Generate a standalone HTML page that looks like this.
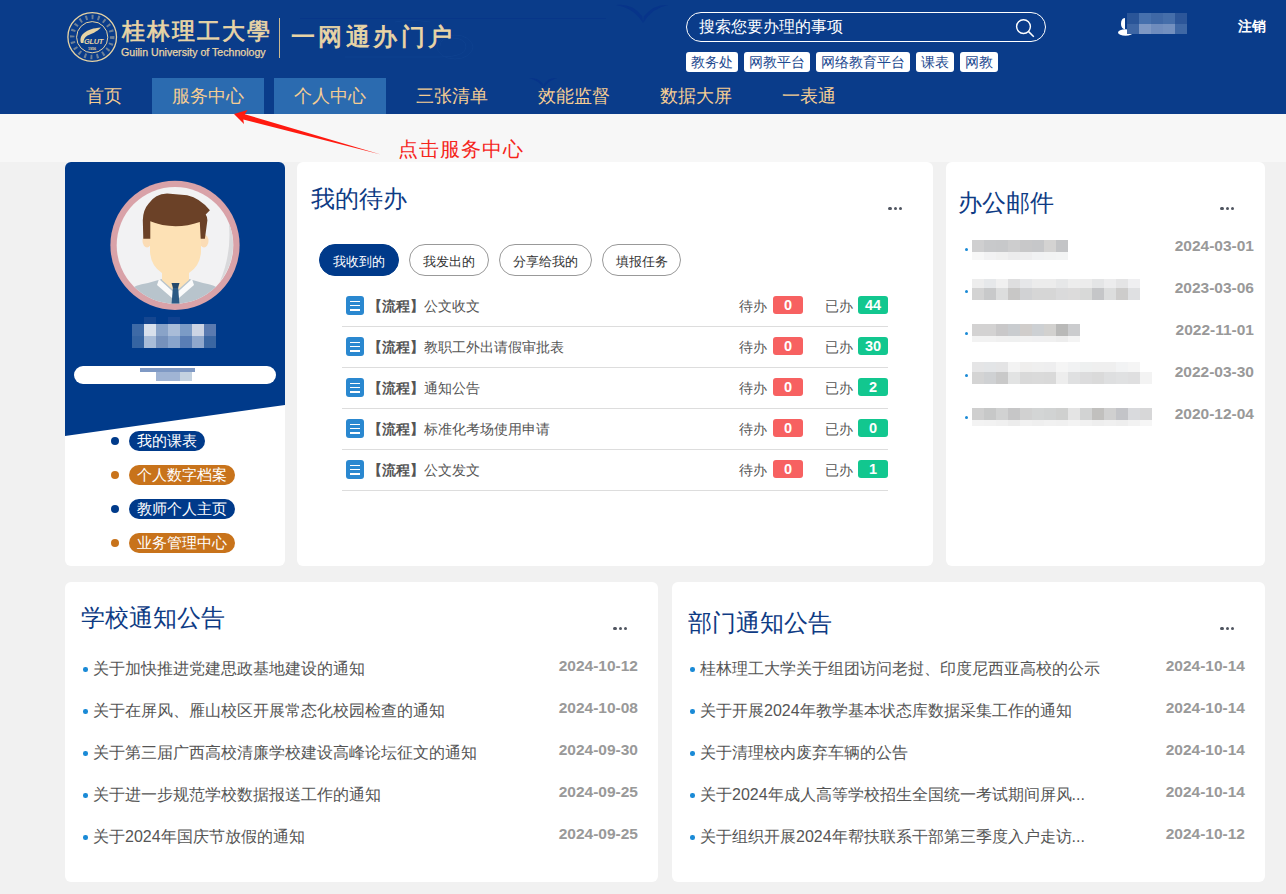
<!DOCTYPE html>
<html><head><meta charset="utf-8">
<style>
*{margin:0;padding:0;box-sizing:border-box}
html,body{width:1286px;height:894px;overflow:hidden;background:#f1f1f1;font-family:"Liberation Sans",sans-serif}
.abs{position:absolute}
#hdr{position:absolute;left:0;top:0;width:1286px;height:114px;background:#0a3c8a}
#band{position:absolute;left:0;top:114px;width:1286px;height:48px;background:#f7f7f7}
.nav{position:absolute;top:78px;height:36px;line-height:36px;font-size:18px;color:#f5cd93;padding:0 20px;white-space:nowrap}
.nav.on{background:#2b6bb0}
.tag{position:absolute;top:52px;height:20px;line-height:20px;font-size:14px;color:#1d4a90;background:#fff;border-radius:3px;padding:0 5px;white-space:nowrap}
.card{position:absolute;background:#fff;border-radius:6px;overflow:hidden}
.ttl{position:absolute;font-size:24px;color:#0e3b84;line-height:30px;white-space:nowrap}
.more{position:absolute;width:14px;height:4px}
.more i{position:absolute;top:0.5px;width:3.2px;height:3.2px;border-radius:50%;background:#505560}
.pill{position:absolute;height:20px;line-height:20px;font-size:15px;color:#fff;border-radius:10px;padding:0 8px;white-space:nowrap}
.dot{position:absolute;width:8px;height:8px;border-radius:50%}
.tab{position:absolute;top:244px;height:32px;line-height:33px;font-size:13px;border-radius:16px;border:1px solid #999;color:#333;text-align:center;white-space:nowrap}
.row{position:absolute;left:342px;width:546px;height:41px;border-bottom:1px solid #ddd}
.ico{position:absolute;left:4px;width:18px;height:19px;background:#2a88d0;border-radius:3px}
.ico i{position:absolute;left:4px;width:10px;height:1.3px;background:#fff}
.rt{position:absolute;left:26px;font-size:14px;color:#555;line-height:20px;white-space:nowrap}
.rt b{color:#555}
.lab{position:absolute;font-size:14px;color:#555;line-height:20px}
.bdg{position:absolute;width:30px;height:18px;line-height:18px;border-radius:3px;color:#fff;font-weight:bold;font-size:14.5px;text-align:center}
.date{position:absolute;font-size:15.5px;font-weight:bold;color:#999;line-height:18px;white-space:nowrap;text-align:right}
.nt{position:absolute;font-size:16px;color:#555;line-height:20px;white-space:nowrap}
.bul{position:absolute;width:4.5px;height:4.5px;border-radius:50%;background:#1a8ad6}
</style></head><body>
<div id="hdr"></div>
<div id="band"></div>
<svg class="abs" style="left:0;top:0" width="1286" height="114">
<path d="M616,5 Q632,3 642,16 L643,23 L644,16 Q654,4 668,5 Q652,8 643,23 Q634,8 616,5 Z" fill="#06328a" opacity="0.8"/>
<path d="M529,78 Q538,77 543,84 L543,88 L544,84 Q549,77 557,78 Q549,80 543.5,88 Q538,80 529,78 Z" fill="#06328a" opacity="0.8"/>
<line x1="300" y1="18.5" x2="606" y2="18.5" stroke="#073489" stroke-width="1" opacity="0.7"/>
<g fill="none" stroke="#0f4290" stroke-width="1" opacity="0.9">
<path d="M345,57 L440,57 Q466,57 466,47 Q466,38 452,38 Q440,38 440,46"/>
<path d="M395,22 Q410,19 430,22"/>
<ellipse cx="455" cy="47" rx="18" ry="12"/>
</g>

</svg>
<!-- nav -->
<div class="nav" style="left:66px">首页</div>
<div class="nav on" style="left:152px">服务中心</div>
<div class="nav on" style="left:274px">个人中心</div>
<div class="nav" style="left:396px">三张清单</div>
<div class="nav" style="left:518px">效能监督</div>
<div class="nav" style="left:640px">数据大屏</div>
<div class="nav" style="left:762px">一表通</div>
<!-- search -->
<div class="abs" style="left:686px;top:12px;width:360px;height:30px;border:1px solid #fff;border-radius:15px"></div>
<div class="abs" style="left:699px;top:15px;font-size:16px;line-height:24px;color:#fff">搜索您要办理的事项</div>
<svg class="abs" style="left:1010px;top:15px" width="30" height="28" viewBox="0 0 30 28"><circle cx="13.5" cy="11.6" r="6.9" fill="none" stroke="#fff" stroke-width="1.4"/><line x1="18.6" y1="16.6" x2="23.8" y2="21.8" stroke="#fff" stroke-width="1.5"/></svg>
<div class="tag" style="left:686px">教务处</div>
<div class="tag" style="left:744px">网教平台</div>
<div class="tag" style="left:816px">网络教育平台</div>
<div class="tag" style="left:916px">课表</div>
<div class="tag" style="left:960px">网教</div>

<!-- logo -->
<svg class="abs" style="left:62px;top:7px" width="62" height="62" viewBox="62 7 62 62">
<g fill="none" stroke="#e6d3a5">
<circle cx="92.2" cy="37" r="24.3" stroke-width="1.3"/>
<circle cx="92.2" cy="37.2" r="15.6" stroke-width="1"/>
<circle cx="92.2" cy="37" r="20" stroke-width="4.5" stroke-dasharray="2 4.2" opacity="0.45"/>
</g>
<path d="M81,43 C78.5,35 86,28.5 101,27.5 C97,32 91,34 87.5,35.5 C84.5,37 83.5,40 83.5,43 Z" fill="#e6d3a5"/>
<text x="93.5" y="44.3" font-size="7.5" font-weight="bold" font-style="italic" fill="#e6d3a5" text-anchor="middle" font-family="Liberation Sans" letter-spacing="-0.3">GLUT</text>
<text x="92" y="49.6" font-size="3.6" font-weight="bold" fill="#e6d3a5" text-anchor="middle" font-family="Liberation Sans">1956</text>
</svg>
<div class="abs" id="cal1" style="left:122px;top:15px;font-size:23px;line-height:32px;font-weight:normal;-webkit-text-stroke:0.7px #e9d5a6;color:#e9d5a6;letter-spacing:2px;white-space:nowrap">桂林理工大學</div>
<div class="abs" id="eng" style="left:121px;top:44.5px;font-size:10.6px;line-height:14px;color:#e9d5a6;white-space:nowrap;-webkit-text-stroke:0.25px #e9d5a6">Guilin University of Technology</div>
<div class="abs" style="left:279px;top:18px;width:1px;height:40px;background:#c9b890"></div>
<div class="abs" id="cal2" style="left:291px;top:20px;font-size:24px;line-height:34px;font-weight:normal;-webkit-text-stroke:0.8px #e9d5a6;color:#e9d5a6;letter-spacing:3.4px;white-space:nowrap">一网通办门户</div>
<!-- user -->
<svg class="abs" style="left:1116px;top:15px" width="20" height="22" viewBox="0 0 20 22"><path d="M9,3 C6,3 5,6 5,9 C5,12 6.5,14 9,14.5 L9,3 Z" fill="#fff"/><ellipse cx="9.5" cy="17.5" rx="7.5" ry="3.2" fill="#fff"/></svg>
<div class="abs" style="left:1238px;top:17px;font-size:14px;line-height:18px;color:#fff;font-weight:bold">注销</div>
<!-- annotation -->
<div class="abs" style="left:398px;top:137px;font-size:20px;line-height:24px;color:#f5251b;letter-spacing:1px;white-space:nowrap">点击服务中心</div>
<svg class="abs" style="left:0;top:0" width="1286" height="170"><path d="M234,114 L247.5,110 L244.8,114.2 L380.8,154.4 L243.3,119.6 L244,124 Z" fill="#ff1a10"/></svg>

<!-- card1 profile -->
<div class="card" style="left:65px;top:162px;width:220px;height:404px">
  <svg class="abs" style="left:0;top:0" width="220" height="280"><polygon points="0,0 220,0 220,243 0,274" fill="#003a8a"/></svg>
</div>
<div class="pill" style="left:129px;top:431px;background:#003a8a">我的课表</div>
<div class="pill" style="left:129px;top:465px;background:#c8731b">个人数字档案</div>
<div class="pill" style="left:129px;top:499px;background:#003a8a">教师个人主页</div>
<div class="pill" style="left:129px;top:533px;background:#c8731b">业务管理中心</div>
<div class="dot" style="left:111px;top:437px;background:#003a8a"></div>
<div class="dot" style="left:111px;top:471px;background:#c8731b"></div>
<div class="dot" style="left:111px;top:505px;background:#003a8a"></div>
<div class="dot" style="left:111px;top:539px;background:#c8731b"></div>
<div class="abs" style="left:74px;top:366px;width:202px;height:18px;background:#fff;border-radius:9px"></div>


<svg class="abs" style="left:110px;top:180px" width="130" height="131" viewBox="0 0 130 131">
<defs><clipPath id="cc"><circle cx="65" cy="65.3" r="58.3"/></clipPath></defs>
<circle cx="65" cy="65.3" r="64.6" fill="#d9a2a8"/>
<circle cx="65" cy="65.3" r="58.3" fill="#f2f2f3"/>
<path d="M118.9,43.3 A58.3,58.3 0 0 1 109.6,102.3 A120,120 0 0 0 118.9,43.3 Z" fill="#d9d9db"/>
<g clip-path="url(#cc)">
<path d="M16,131 L20,110 Q24,105 38,103 L52,99 L79,99 L93,103 Q106,105 110,110 L114,131 Z" fill="#b8c4cc"/>
<path d="M49,99 L65.5,114 L82,99 L84,105 L65.5,121 L47,105 Z" fill="#fafafa"/>
<path d="M52,92 L79,92 L79,100 L65.5,112 L52,100 Z" fill="#fde1b5"/>
<path d="M63,106 L68,106 L70,131 L61,131 Z" fill="#2c5a85"/>
<path d="M61.5,103 L69.5,103 L68,108 L63,108 Z" fill="#24496c"/>
</g>
<ellipse cx="37" cy="61" rx="4.5" ry="6.5" fill="#fbdcb5"/>
<ellipse cx="94" cy="61" rx="4.5" ry="6.5" fill="#fbdcb5"/>
<path d="M40,38 L91,38 L91,72 Q90,86 79,93 Q72,100 65.5,101 Q59,100 52,93 Q41,86 40,72 Z" fill="#fde1b5"/>
<path d="M33.3,58.8 L32.8,40.3 Q33,30 38.7,23.6 Q45,14 57.1,13.5 L77.2,15.2 Q90,18 99.9,30.3 L95.7,34.5 Q97.5,37 97.4,40.3 L94.9,58.8 L90.7,58.8 L89.8,42 Q78,46.2 65.5,46.2 Q52,46 40.3,41.2 L40.3,58.8 Z" fill="#6b4127"/>
</svg>
<div class="abs" style="left:1127px;top:13px;width:12px;height:11px;background:#2a5598"></div><div class="abs" style="left:1127px;top:24px;width:12px;height:10px;background:#3e66a4"></div>
<div class="abs" style="left:1139px;top:13px;width:12px;height:11px;background:#4670ad"></div><div class="abs" style="left:1139px;top:24px;width:12px;height:10px;background:#7e98c4"></div>
<div class="abs" style="left:1151px;top:13px;width:12px;height:11px;background:#3f68a6"></div><div class="abs" style="left:1151px;top:24px;width:12px;height:10px;background:#6f8cbd"></div>
<div class="abs" style="left:1163px;top:13px;width:12px;height:11px;background:#456eaa"></div><div class="abs" style="left:1163px;top:24px;width:12px;height:10px;background:#7390bf"></div>
<div class="abs" style="left:1175px;top:13px;width:12px;height:11px;background:#2c5699"></div><div class="abs" style="left:1175px;top:24px;width:12px;height:10px;background:#3f68a5"></div>
<div class="abs" style="left:132px;top:324px;width:12px;height:12px;background:#3e6aa6"></div><div class="abs" style="left:132px;top:336px;width:12px;height:12px;background:#3564a2"></div>
<div class="abs" style="left:144px;top:324px;width:12px;height:12px;background:#d8e0ec"></div><div class="abs" style="left:144px;top:336px;width:12px;height:12px;background:#a8bcd8"></div>
<div class="abs" style="left:156px;top:324px;width:12px;height:12px;background:#89a3c8"></div><div class="abs" style="left:156px;top:336px;width:12px;height:12px;background:#7591bc"></div>
<div class="abs" style="left:168px;top:324px;width:12px;height:12px;background:#a9bcd8"></div><div class="abs" style="left:168px;top:336px;width:12px;height:12px;background:#88a4cc"></div>
<div class="abs" style="left:180px;top:324px;width:12px;height:12px;background:#7b9bc6"></div><div class="abs" style="left:180px;top:336px;width:12px;height:12px;background:#5a7eb5"></div>
<div class="abs" style="left:192px;top:324px;width:12px;height:12px;background:#ccd4e4"></div><div class="abs" style="left:192px;top:336px;width:12px;height:12px;background:#8fa7cc"></div>
<div class="abs" style="left:204px;top:324px;width:12px;height:12px;background:#5a7ab0"></div><div class="abs" style="left:204px;top:336px;width:12px;height:12px;background:#3a66a2"></div>
<div class="abs" style="left:144px;top:317px;width:12px;height:7px;background:#154690"></div><div class="abs" style="left:168px;top:317px;width:12px;height:7px;background:#0f4190"></div><div class="abs" style="left:140px;top:368px;width:55px;height:4px;background:#7f99c4"></div><div class="abs" style="left:156px;top:372px;width:24px;height:9px;background:#a0b4d4"></div><div class="abs" style="left:180px;top:372px;width:12px;height:9px;background:#c4d2e0"></div>
<!-- card2 todo -->
<div class="card" style="left:297px;top:162px;width:636px;height:404px"></div>
<div class="ttl" style="left:311px;top:184px">我的待办</div>
<div class="more" style="left:888px;top:206px"><i style="left:0.4px"></i><i style="left:5.6px"></i><i style="left:10.8px"></i></div>
<div class="tab" style="left:319px;width:80px;background:#003a8a;border-color:#003a8a;color:#fff">我收到的</div>
<div class="tab" style="left:409px;width:80px">我发出的</div>
<div class="tab" style="left:499px;width:93px">分享给我的</div>
<div class="tab" style="left:602px;width:79px">填报任务</div>

<!-- card3 mail -->
<div class="card" style="left:946px;top:162px;width:319px;height:404px"></div>
<div class="ttl" style="left:958px;top:187.5px">办公邮件</div>
<div class="more" style="left:1220px;top:206px"><i style="left:0.4px"></i><i style="left:5.6px"></i><i style="left:10.8px"></i></div>

<div class="abs" style="left:972px;top:240px;width:12px;height:12px;background:#cfcfd0"></div>
<div class="abs" style="left:984px;top:240px;width:12px;height:12px;background:#c8c9cb"></div>
<div class="abs" style="left:996px;top:240px;width:12px;height:12px;background:#c7c8ca"></div>
<div class="abs" style="left:1008px;top:240px;width:12px;height:12px;background:#cdcdce"></div>
<div class="abs" style="left:1020px;top:240px;width:12px;height:12px;background:#c8c8c9"></div>
<div class="abs" style="left:1032px;top:240px;width:12px;height:12px;background:#c6c7c9"></div>
<div class="abs" style="left:1044px;top:240px;width:12px;height:12px;background:#d4d3d2"></div>
<div class="abs" style="left:1056px;top:240px;width:12px;height:12px;background:#c3c4c6"></div>
<div class="abs" style="left:972px;top:252px;width:12px;height:8px;background:#f7f7f7"></div>
<div class="abs" style="left:984px;top:252px;width:12px;height:8px;background:#f2f2f3"></div>
<div class="abs" style="left:996px;top:252px;width:12px;height:8px;background:#f0f0f0"></div>
<div class="abs" style="left:1008px;top:252px;width:12px;height:8px;background:#ececed"></div>
<div class="abs" style="left:1020px;top:252px;width:12px;height:8px;background:#eeeeef"></div>
<div class="abs" style="left:1032px;top:252px;width:12px;height:8px;background:#f1f2f3"></div>
<div class="abs" style="left:1044px;top:252px;width:12px;height:8px;background:#f2f3f3"></div>
<div class="abs" style="left:1056px;top:252px;width:12px;height:8px;background:#f3f4f4"></div>
<div class="abs" style="left:972px;top:279px;width:12px;height:9px;background:#ededed"></div>
<div class="abs" style="left:984px;top:279px;width:12px;height:9px;background:#e6e8ea"></div>
<div class="abs" style="left:996px;top:279px;width:12px;height:9px;background:#f0f0f0"></div>
<div class="abs" style="left:1008px;top:279px;width:12px;height:9px;background:#dededf"></div>
<div class="abs" style="left:1020px;top:279px;width:12px;height:9px;background:#e6e7e9"></div>
<div class="abs" style="left:1032px;top:279px;width:12px;height:9px;background:#ececec"></div>
<div class="abs" style="left:1044px;top:279px;width:12px;height:9px;background:#ececec"></div>
<div class="abs" style="left:1056px;top:279px;width:12px;height:9px;background:#e6e7e8"></div>
<div class="abs" style="left:1068px;top:279px;width:12px;height:9px;background:#ededed"></div>
<div class="abs" style="left:1080px;top:279px;width:12px;height:9px;background:#ececec"></div>
<div class="abs" style="left:1092px;top:279px;width:12px;height:9px;background:#e4e5e6"></div>
<div class="abs" style="left:1104px;top:279px;width:12px;height:9px;background:#ececed"></div>
<div class="abs" style="left:1116px;top:279px;width:12px;height:9px;background:#e4e4e5"></div>
<div class="abs" style="left:1128px;top:279px;width:12px;height:9px;background:#efeff1"></div>
<div class="abs" style="left:972px;top:288px;width:12px;height:12px;background:#d3d3d3"></div>
<div class="abs" style="left:984px;top:288px;width:12px;height:12px;background:#c8c9ca"></div>
<div class="abs" style="left:996px;top:288px;width:12px;height:12px;background:#dcdddd"></div>
<div class="abs" style="left:1008px;top:288px;width:12px;height:12px;background:#c8c7c6"></div>
<div class="abs" style="left:1020px;top:288px;width:12px;height:12px;background:#d1d2d4"></div>
<div class="abs" style="left:1032px;top:288px;width:12px;height:12px;background:#d6d6d6"></div>
<div class="abs" style="left:1044px;top:288px;width:12px;height:12px;background:#d6d6d6"></div>
<div class="abs" style="left:1056px;top:288px;width:12px;height:12px;background:#dadadb"></div>
<div class="abs" style="left:1068px;top:288px;width:12px;height:12px;background:#dcdbdb"></div>
<div class="abs" style="left:1080px;top:288px;width:12px;height:12px;background:#d8d9d8"></div>
<div class="abs" style="left:1092px;top:288px;width:12px;height:12px;background:#c5c6c8"></div>
<div class="abs" style="left:1104px;top:288px;width:12px;height:12px;background:#dcdddd"></div>
<div class="abs" style="left:1116px;top:288px;width:12px;height:12px;background:#cdcccb"></div>
<div class="abs" style="left:1128px;top:288px;width:12px;height:12px;background:#dfe0e2"></div>
<div class="abs" style="left:972px;top:324px;width:12px;height:12px;background:#d3d2d2"></div>
<div class="abs" style="left:984px;top:324px;width:12px;height:12px;background:#d3d2d2"></div>
<div class="abs" style="left:996px;top:324px;width:12px;height:12px;background:#c9c8c9"></div>
<div class="abs" style="left:1008px;top:324px;width:12px;height:12px;background:#c9cccf"></div>
<div class="abs" style="left:1020px;top:324px;width:12px;height:12px;background:#d0cdcb"></div>
<div class="abs" style="left:1032px;top:324px;width:12px;height:12px;background:#cdd0d3"></div>
<div class="abs" style="left:1044px;top:324px;width:12px;height:12px;background:#d2d1cf"></div>
<div class="abs" style="left:1056px;top:324px;width:12px;height:12px;background:#b9b9b8"></div>
<div class="abs" style="left:1068px;top:324px;width:12px;height:12px;background:#cbccce"></div>
<div class="abs" style="left:972px;top:336px;width:12px;height:6px;background:#f2f2f2"></div>
<div class="abs" style="left:984px;top:336px;width:12px;height:6px;background:#f2f2f2"></div>
<div class="abs" style="left:996px;top:336px;width:12px;height:6px;background:#f0f0f0"></div>
<div class="abs" style="left:1008px;top:336px;width:12px;height:6px;background:#eff0f0"></div>
<div class="abs" style="left:1020px;top:336px;width:12px;height:6px;background:#f1f1f1"></div>
<div class="abs" style="left:1032px;top:336px;width:12px;height:6px;background:#f0f0f1"></div>
<div class="abs" style="left:1044px;top:336px;width:12px;height:6px;background:#f0f0f0"></div>
<div class="abs" style="left:1056px;top:336px;width:12px;height:6px;background:#ededed"></div>
<div class="abs" style="left:1068px;top:336px;width:12px;height:6px;background:#f4f4f4"></div>
<div class="abs" style="left:972px;top:362px;width:12px;height:10px;background:#e5e5e6"></div>
<div class="abs" style="left:984px;top:362px;width:12px;height:10px;background:#e3e5e7"></div>
<div class="abs" style="left:996px;top:362px;width:12px;height:10px;background:#e4e4e5"></div>
<div class="abs" style="left:1008px;top:362px;width:12px;height:10px;background:#f3f3f3"></div>
<div class="abs" style="left:1020px;top:362px;width:12px;height:10px;background:#efeeed"></div>
<div class="abs" style="left:1032px;top:362px;width:12px;height:10px;background:#efefef"></div>
<div class="abs" style="left:1044px;top:362px;width:12px;height:10px;background:#eeeeef"></div>
<div class="abs" style="left:1056px;top:362px;width:12px;height:10px;background:#f5f5f5"></div>
<div class="abs" style="left:1068px;top:362px;width:12px;height:10px;background:#f1f2f3"></div>
<div class="abs" style="left:1080px;top:362px;width:12px;height:10px;background:#eef0f0"></div>
<div class="abs" style="left:1092px;top:362px;width:12px;height:10px;background:#efefef"></div>
<div class="abs" style="left:1104px;top:362px;width:12px;height:10px;background:#efefef"></div>
<div class="abs" style="left:1116px;top:362px;width:12px;height:10px;background:#f2f3f4"></div>
<div class="abs" style="left:1128px;top:362px;width:12px;height:10px;background:#f5f5f5"></div>
<div class="abs" style="left:972px;top:372px;width:12px;height:12px;background:#d4d4d4"></div>
<div class="abs" style="left:984px;top:372px;width:12px;height:12px;background:#cfd1d3"></div>
<div class="abs" style="left:996px;top:372px;width:12px;height:12px;background:#c9c9c9"></div>
<div class="abs" style="left:1008px;top:372px;width:12px;height:12px;background:#e2e3e3"></div>
<div class="abs" style="left:1020px;top:372px;width:12px;height:12px;background:#d9d9d9"></div>
<div class="abs" style="left:1032px;top:372px;width:12px;height:12px;background:#dadada"></div>
<div class="abs" style="left:1044px;top:372px;width:12px;height:12px;background:#d9d9d9"></div>
<div class="abs" style="left:1056px;top:372px;width:12px;height:12px;background:#ededed"></div>
<div class="abs" style="left:1068px;top:372px;width:12px;height:12px;background:#dfe0e1"></div>
<div class="abs" style="left:1080px;top:372px;width:12px;height:12px;background:#dcdcdd"></div>
<div class="abs" style="left:1092px;top:372px;width:12px;height:12px;background:#dadada"></div>
<div class="abs" style="left:1104px;top:372px;width:12px;height:12px;background:#dedfe0"></div>
<div class="abs" style="left:1116px;top:372px;width:12px;height:12px;background:#e0e1e2"></div>
<div class="abs" style="left:1128px;top:372px;width:12px;height:12px;background:#dfdfe0"></div>
<div class="abs" style="left:1140px;top:372px;width:12px;height:12px;background:#f3f3f3"></div>
<div class="abs" style="left:972px;top:408px;width:12px;height:12px;background:#cfcfcf"></div>
<div class="abs" style="left:984px;top:408px;width:12px;height:12px;background:#c7c8c8"></div>
<div class="abs" style="left:996px;top:408px;width:12px;height:12px;background:#d1d2d2"></div>
<div class="abs" style="left:1008px;top:408px;width:12px;height:12px;background:#c6c6c7"></div>
<div class="abs" style="left:1020px;top:408px;width:12px;height:12px;background:#d1d1d1"></div>
<div class="abs" style="left:1032px;top:408px;width:12px;height:12px;background:#d3d5d5"></div>
<div class="abs" style="left:1044px;top:408px;width:12px;height:12px;background:#d1d3d3"></div>
<div class="abs" style="left:1056px;top:408px;width:12px;height:12px;background:#cfd0cf"></div>
<div class="abs" style="left:1068px;top:408px;width:12px;height:12px;background:#e4e4e4"></div>
<div class="abs" style="left:1080px;top:408px;width:12px;height:12px;background:#d2d3d3"></div>
<div class="abs" style="left:1092px;top:408px;width:12px;height:12px;background:#c1c0be"></div>
<div class="abs" style="left:1104px;top:408px;width:12px;height:12px;background:#d0d0d0"></div>
<div class="abs" style="left:1116px;top:408px;width:12px;height:12px;background:#c3c4c8"></div>
<div class="abs" style="left:1128px;top:408px;width:12px;height:12px;background:#d9dadd"></div>
<div class="abs" style="left:1140px;top:408px;width:12px;height:12px;background:#d7d7d8"></div>
<div class="abs" style="left:972px;top:420px;width:12px;height:6px;background:#f3f3f3"></div>
<div class="abs" style="left:984px;top:420px;width:12px;height:6px;background:#f2f2f2"></div>
<div class="abs" style="left:996px;top:420px;width:12px;height:6px;background:#f0f0f0"></div>
<div class="abs" style="left:1008px;top:420px;width:12px;height:6px;background:#ececec"></div>
<div class="abs" style="left:1020px;top:420px;width:12px;height:6px;background:#f1f1f1"></div>
<div class="abs" style="left:1032px;top:420px;width:12px;height:6px;background:#efefef"></div>
<div class="abs" style="left:1044px;top:420px;width:12px;height:6px;background:#f1f1f1"></div>
<div class="abs" style="left:1056px;top:420px;width:12px;height:6px;background:#f0f0f0"></div>
<div class="abs" style="left:1068px;top:420px;width:12px;height:6px;background:#f3f3f3"></div>
<div class="abs" style="left:1080px;top:420px;width:12px;height:6px;background:#f1f1f1"></div>
<div class="abs" style="left:1092px;top:420px;width:12px;height:6px;background:#eeeeee"></div>
<div class="abs" style="left:1104px;top:420px;width:12px;height:6px;background:#f0f0f0"></div>
<div class="abs" style="left:1116px;top:420px;width:12px;height:6px;background:#eeeeee"></div>
<div class="abs" style="left:1128px;top:420px;width:12px;height:6px;background:#f2f2f2"></div>
<div class="abs" style="left:1140px;top:420px;width:12px;height:6px;background:#f6f6f6"></div>
<!-- card4 -->
<div class="card" style="left:65px;top:582px;width:593px;height:300px"></div>
<div class="ttl" style="left:81px;top:603px">学校通知公告</div>
<div class="more" style="left:613px;top:626px"><i style="left:0.4px"></i><i style="left:5.6px"></i><i style="left:10.8px"></i></div>
<!-- card5 -->
<div class="card" style="left:672px;top:582px;width:593px;height:300px"></div>
<div class="ttl" style="left:688px;top:608px">部门通知公告</div>
<div class="more" style="left:1220px;top:626px"><i style="left:0.4px"></i><i style="left:5.6px"></i><i style="left:10.8px"></i></div>

<div class="row" style="top:286px"><div class="ico" style="top:10px"><i style="top:5px"></i><i style="top:9.2px"></i><i style="top:13.4px"></i></div><div class="rt" style="top:10px"><b>【流程】</b>公文收文</div><div class="lab" style="left:397px;top:10px">待办</div><div class="bdg" style="left:431px;top:10px;background:#f76161">0</div><div class="lab" style="left:483px;top:10px">已办</div><div class="bdg" style="left:516px;top:10px;background:#12c78f">44</div></div>
<div class="row" style="top:327px"><div class="ico" style="top:10px"><i style="top:5px"></i><i style="top:9.2px"></i><i style="top:13.4px"></i></div><div class="rt" style="top:10px"><b>【流程】</b>教职工外出请假审批表</div><div class="lab" style="left:397px;top:10px">待办</div><div class="bdg" style="left:431px;top:10px;background:#f76161">0</div><div class="lab" style="left:483px;top:10px">已办</div><div class="bdg" style="left:516px;top:10px;background:#12c78f">30</div></div>
<div class="row" style="top:368px"><div class="ico" style="top:10px"><i style="top:5px"></i><i style="top:9.2px"></i><i style="top:13.4px"></i></div><div class="rt" style="top:10px"><b>【流程】</b>通知公告</div><div class="lab" style="left:397px;top:10px">待办</div><div class="bdg" style="left:431px;top:10px;background:#f76161">0</div><div class="lab" style="left:483px;top:10px">已办</div><div class="bdg" style="left:516px;top:10px;background:#12c78f">2</div></div>
<div class="row" style="top:409px"><div class="ico" style="top:10px"><i style="top:5px"></i><i style="top:9.2px"></i><i style="top:13.4px"></i></div><div class="rt" style="top:10px"><b>【流程】</b>标准化考场使用申请</div><div class="lab" style="left:397px;top:10px">待办</div><div class="bdg" style="left:431px;top:10px;background:#f76161">0</div><div class="lab" style="left:483px;top:10px">已办</div><div class="bdg" style="left:516px;top:10px;background:#12c78f">0</div></div>
<div class="row" style="top:450px"><div class="ico" style="top:10px"><i style="top:5px"></i><i style="top:9.2px"></i><i style="top:13.4px"></i></div><div class="rt" style="top:10px"><b>【流程】</b>公文发文</div><div class="lab" style="left:397px;top:10px">待办</div><div class="bdg" style="left:431px;top:10px;background:#f76161">0</div><div class="lab" style="left:483px;top:10px">已办</div><div class="bdg" style="left:516px;top:10px;background:#12c78f">1</div></div>
<div class="date" style="right:32px;top:237px">2024-03-01</div>
<div class="bul" style="left:964.2px;top:247px;width:3.4px;height:3.4px;margin:0.5px"></div>
<div class="date" style="right:32px;top:279px">2023-03-06</div>
<div class="bul" style="left:964.2px;top:289px;width:3.4px;height:3.4px;margin:0.5px"></div>
<div class="date" style="right:32px;top:321px">2022-11-01</div>
<div class="bul" style="left:964.2px;top:331px;width:3.4px;height:3.4px;margin:0.5px"></div>
<div class="date" style="right:32px;top:363px">2022-03-30</div>
<div class="bul" style="left:964.2px;top:373px;width:3.4px;height:3.4px;margin:0.5px"></div>
<div class="date" style="right:32px;top:405px">2020-12-04</div>
<div class="bul" style="left:964.2px;top:415px;width:3.4px;height:3.4px;margin:0.5px"></div>
<div class="bul" style="left:83px;top:667px"></div><div class="nt" style="left:93px;top:659px">关于加快推进党建思政基地建设的通知</div><div class="date" style="right:648px;top:657px">2024-10-12</div>
<div class="bul" style="left:83px;top:709px"></div><div class="nt" style="left:93px;top:701px">关于在屏风、雁山校区开展常态化校园检查的通知</div><div class="date" style="right:648px;top:699px">2024-10-08</div>
<div class="bul" style="left:83px;top:751px"></div><div class="nt" style="left:93px;top:743px">关于第三届广西高校清廉学校建设高峰论坛征文的通知</div><div class="date" style="right:648px;top:741px">2024-09-30</div>
<div class="bul" style="left:83px;top:793px"></div><div class="nt" style="left:93px;top:785px">关于进一步规范学校数据报送工作的通知</div><div class="date" style="right:648px;top:783px">2024-09-25</div>
<div class="bul" style="left:83px;top:835px"></div><div class="nt" style="left:93px;top:827px">关于2024年国庆节放假的通知</div><div class="date" style="right:648px;top:825px">2024-09-25</div>
<div class="bul" style="left:690px;top:667px"></div><div class="nt" style="left:700px;top:659px">桂林理工大学关于组团访问老挝、印度尼西亚高校的公示</div><div class="date" style="right:41px;top:657px">2024-10-14</div>
<div class="bul" style="left:690px;top:709px"></div><div class="nt" style="left:700px;top:701px">关于开展2024年教学基本状态库数据采集工作的通知</div><div class="date" style="right:41px;top:699px">2024-10-14</div>
<div class="bul" style="left:690px;top:751px"></div><div class="nt" style="left:700px;top:743px">关于清理校内废弃车辆的公告</div><div class="date" style="right:41px;top:741px">2024-10-14</div>
<div class="bul" style="left:690px;top:793px"></div><div class="nt" style="left:700px;top:785px">关于2024年成人高等学校招生全国统一考试期间屏风...</div><div class="date" style="right:41px;top:783px">2024-10-14</div>
<div class="bul" style="left:690px;top:835px"></div><div class="nt" style="left:700px;top:827px">关于组织开展2024年帮扶联系干部第三季度入户走访...</div><div class="date" style="right:41px;top:825px">2024-10-12</div>
</body></html>
